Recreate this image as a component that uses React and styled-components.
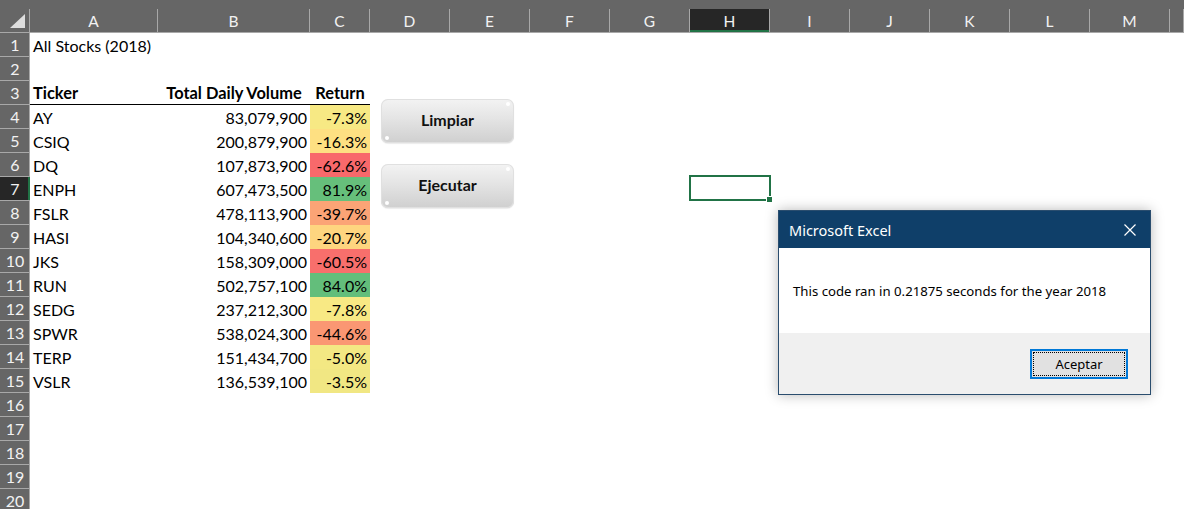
import React from "react";
import styled, { createGlobalStyle } from "styled-components";

const GlobalStyle = createGlobalStyle`
  html, body {
    margin: 0;
    padding: 0;
    background: #ffffff;
    overflow: hidden;
  }
  body {
    font-family: Lato, "Liberation Sans", sans-serif;
  }
`;

const COLS = "30px 128px 152px 60px repeat(10, 80px) 1fr";
const LETTERS = ["A", "B", "C", "D", "E", "F", "G", "H", "I", "J", "K", "L", "M", ""];

const Page = styled.div`
  position: relative;
  width: 1184px;
  height: 509px;
  overflow: hidden;
`;

const TopBand = styled.div`
  height: 9px;
  background: #666666;
`;

const HeaderRow = styled.div`
  display: grid;
  grid-template-columns: ${COLS};
  height: 23px;
  background: #666666;
  border-bottom: 1px solid #a8a8a8;
`;

const Corner = styled.div`
  position: relative;
  border-right: 1px solid #a8a8a8;
  &::after {
    content: "";
    position: absolute;
    right: 4px;
    bottom: 4px;
    width: 0;
    height: 0;
    border-left: 15px solid transparent;
    border-bottom: 14px solid #dedede;
  }
`;

const ColHead = styled.div`
  display: flex;
  align-items: center;
  justify-content: center;
  font-family: Lato, "Liberation Sans", sans-serif;
  font-size: 15.5px;
  color: #f2f2f2;
  border-right: 1px solid #a8a8a8;
  box-sizing: border-box;
  background: ${(p) => (p.$active ? "#262626" : "transparent")};
  box-shadow: ${(p) => (p.$active ? "inset 0 -2px 0 #217346" : "none")};
`;

const Row = styled.div`
  display: grid;
  grid-template-columns: ${COLS};
  height: 24px;
`;

const RowHead = styled.div`
  display: flex;
  align-items: center;
  justify-content: center;
  font-family: Lato, "Liberation Sans", sans-serif;
  font-size: 16px;
  color: #f2f2f2;
  background: ${(p) => (p.$active ? "#262626" : "#666666")};
  border-bottom: 1px solid #a8a8a8;
  box-sizing: border-box;
  box-shadow: ${(p) => (p.$active ? "inset -2px 0 0 #217346" : "inset -1px 0 0 #a8a8a8")};
`;

const Cell = styled.div`
  position: relative;
  display: flex;
  align-items: center;
  justify-content: ${(p) =>
    p.$align === "right" ? "flex-end" : p.$align === "center" ? "center" : "flex-start"};
  padding: 0 3px 0 3px;
  box-sizing: border-box;
  font-size: ${(p) => (p.$bold ? "16.4px" : "16px")};
  font-weight: ${(p) => (p.$bold ? 700 : 400)};
  color: #000000;
  white-space: nowrap;
  background: ${(p) => p.$bg || "transparent"};
  border-bottom: ${(p) => (p.$line ? "1px solid #000000" : "none")};
`;

const Selection = styled.div`
  position: absolute;
  left: -1px;
  top: -2px;
  right: -1px;
  bottom: 0;
  border: 2px solid #217346;
  &::after {
    content: "";
    position: absolute;
    right: -4px;
    bottom: -4px;
    width: 5px;
    height: 5px;
    background: #217346;
    border: 1px solid #ffffff;
  }
`;

const MacroButton = styled.div`
  position: absolute;
  left: 381px;
  top: ${(p) => p.$top}px;
  width: 133px;
  height: 44px;
  box-sizing: border-box;
  padding-bottom: 4px;
  border-radius: 7px;
  display: flex;
  align-items: center;
  justify-content: center;
  font-family: Lato, "DejaVu Sans", sans-serif;
  font-weight: 700;
  font-size: 16px;
  color: #111111;
  background: linear-gradient(#f3f3f3 0%, #e4e4e4 45%, #cfcfcf 100%);
  box-shadow: inset 0 0 0 1px #e0e0e0, 0 1px 1px rgba(0, 0, 0, 0.08);
  &::before,
  &::after {
    content: "";
    position: absolute;
    width: 4px;
    height: 4px;
    border-radius: 50%;
    background: #ffffff;
  }
  &::before {
    top: 3px;
    right: 4px;
  }
  &::after {
    bottom: 3px;
    left: 4px;
  }
`;

const Dialog = styled.div`
  position: absolute;
  left: 778px;
  top: 210px;
  width: 373px;
  height: 185px;
  box-sizing: border-box;
  border: 1px solid #2a4d6e;
  background: #f0f0f0;
  box-shadow: 0 0 12px rgba(0, 0, 0, 0.28);
  display: flex;
  flex-direction: column;
  font-family: "Noto Sans", "Open Sans", sans-serif;
`;

const TitleBar = styled.div`
  height: 37px;
  background: #0f3f69;
  display: flex;
  align-items: center;
  justify-content: space-between;
  padding: 0 14px 0 10px;
  color: #ffffff;
  font-size: 14.5px;
`;

const CloseIcon = styled.svg`
  width: 12px;
  height: 12px;
  display: block;
`;

const Body = styled.div`
  height: 85px;
  background: #ffffff;
  display: flex;
  align-items: center;
  padding: 0 0 0 14px;
  font-size: 13.2px;
  color: #000000;
`;

const Footer = styled.div`
  flex: 1;
  display: flex;
  align-items: center;
  justify-content: flex-end;
  padding: 0 22px 0 0;
`;

const OkButton = styled.div`
  width: 98px;
  height: 30px;
  box-sizing: border-box;
  border: 2px solid #0078d7;
  background: #e1e1e1;
  display: flex;
  align-items: center;
  justify-content: center;
  font-size: 13px;
  color: #000000;
  outline: 1px dotted #000000;
  outline-offset: -4px;
`;

const data = [
  ["AY", "83,079,900", "-7.3%", "#F7E984"],
  ["CSIQ", "200,879,900", "-16.3%", "#FEE082"],
  ["DQ", "107,873,900", "-62.6%", "#F8696B"],
  ["ENPH", "607,473,500", "81.9%", "#66BF7B"],
  ["FSLR", "478,113,900", "-39.7%", "#FBA476"],
  ["HASI", "104,340,600", "-20.7%", "#FED57F"],
  ["JKS", "158,309,000", "-60.5%", "#F86F6C"],
  ["RUN", "502,757,100", "84.0%", "#63BE7B"],
  ["SEDG", "237,212,300", "-7.8%", "#F8E984"],
  ["SPWR", "538,024,300", "-44.6%", "#FA9773"],
  ["TERP", "151,434,700", "-5.0%", "#F3E883"],
  ["VSLR", "136,539,100", "-3.5%", "#F1E783"],
];

function rowCells(n) {
  if (n === 1) return [{ text: "All Stocks (2018)" }];
  if (n === 3)
    return [
      { text: "Ticker", bold: true, line: true },
      { text: "Total Daily Volume", bold: true, line: true, align: "center" },
      { text: "Return", bold: true, line: true, align: "center" },
    ];
  const d = data[n - 4];
  if (d)
    return [
      { text: d[0] },
      { text: d[1], align: "right" },
      { text: d[2], align: "right", bg: d[3] },
    ];
  return [];
}

function SheetRow({ n }) {
  const cells = rowCells(n);
  const all = LETTERS.map((_, i) => cells[i] || {});
  return (
    <Row>
      <RowHead $active={n === 7}>{n}</RowHead>
      {all.map((c, i) => (
        <Cell key={i} $align={c.align} $bold={c.bold} $bg={c.bg} $line={c.line}>
          {c.text}
          {n === 7 && i === 7 && <Selection />}
        </Cell>
      ))}
    </Row>
  );
}

export default function App() {
  const rows = Array.from({ length: 20 }, (_, i) => i + 1);
  return (
    <Page>
      <GlobalStyle />
      <TopBand />
      <HeaderRow>
        <Corner />
        {LETTERS.map((l, i) => (
          <ColHead key={i} $active={l === "H"}>
            {l}
          </ColHead>
        ))}
      </HeaderRow>
      {rows.map((n) => (
        <SheetRow key={n} n={n} />
      ))}

      <MacroButton $top={99}>Limpiar</MacroButton>
      <MacroButton $top={164}>Ejecutar</MacroButton>

      <Dialog>
        <TitleBar>
          <span>Microsoft Excel</span>
          <CloseIcon viewBox="0 0 12 12">
            <path d="M0.5 0.5 L11.5 11.5 M11.5 0.5 L0.5 11.5" stroke="#ffffff" strokeWidth="1.2" />
          </CloseIcon>
        </TitleBar>
        <Body>This code ran in 0.21875 seconds for the year 2018</Body>
        <Footer>
          <OkButton>Aceptar</OkButton>
        </Footer>
      </Dialog>
    </Page>
  );
}
